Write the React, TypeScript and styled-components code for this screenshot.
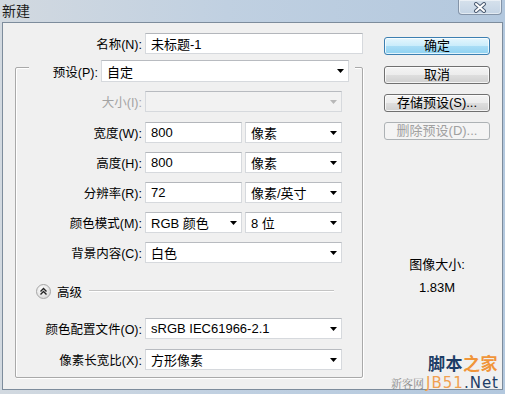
import React from "react";
import styled, { createGlobalStyle } from "styled-components";

const GlobalStyle = createGlobalStyle`
  html, body {
    margin: 0;
    padding: 0;
    background: #c3d2e2;
  }
  body {
    font-family: "Liberation Sans", "Noto Sans CJK SC", sans-serif;
  }
`;

const Window = styled.div`
  position: relative;
  width: 505px;
  height: 394px;
  display: flex;
  flex-direction: column;
  overflow: hidden;
  background: linear-gradient(to right, #d2d9e0 0%, #c0d0e1 45%, #b3c8de 100%);
`;

const TitleBar = styled.div`
  height: 22px;
  display: flex;
  justify-content: space-between;
  align-items: flex-start;
  padding-left: 2px;
`;

const Title = styled.span`
  font-family: "Noto Sans CJK SC", sans-serif;
  font-size: 14px;
  line-height: 21px;
  color: #1c1c1c;
`;

const CloseButton = styled.div`
  width: 44px;
  height: 15px;
  margin-right: 3px;
  box-sizing: border-box;
  border: 1px solid #8494a8;
  border-top: none;
  border-radius: 0 0 4px 4px;
  background: linear-gradient(#d6e1ec, #c4d4e5);
  box-shadow: inset 0 0 0 1px rgba(255, 255, 255, 0.5);
  display: flex;
  align-items: center;
  justify-content: center;
`;

const Client = styled.div`
  flex: 1;
  margin: 0 2px 4px 2px;
  border: 1px solid #7d8c9c;
  background: #f0f0f0;
  display: flex;
  padding-top: 10px;
`;

const LeftPane = styled.div`
  width: 360px;
  display: flex;
  flex-direction: column;
`;

const RightPane = styled.div`
  display: flex;
  flex-direction: column;
  padding: 4px 0 0 21px;
  width: 106px;
`;

const Row = styled.div<{ $mt?: number }>`
  display: flex;
  align-items: center;
  gap: 3px;
  height: 21px;
  margin-top: ${(p) => p.$mt ?? 0}px;
`;

const Label = styled.span<{ $w: number; $disabled?: boolean }>`
  width: ${(p) => p.$w}px;
  flex: none;
  text-align: right;
  font-size: 12.5px;
  white-space: nowrap;
  color: ${(p) => (p.$disabled ? "#a3a3a3" : "#000")};
`;

const TextField = styled.input<{ $w: number }>`
  box-sizing: border-box;
  width: ${(p) => p.$w}px;
  height: 21px;
  margin: 0;
  padding: 0 5px;
  border: 1px solid #d6d9dd;
  border-top-color: #b3b6bb;
  background: #fff;
  font-family: inherit;
  font-size: 13px;
  color: #000;
  outline: none;
`;

const Combo = styled.div<{ $w: number; $h?: number; $disabled?: boolean }>`
  box-sizing: border-box;
  width: ${(p) => p.$w}px;
  height: ${(p) => p.$h ?? 21}px;
  flex: none;
  display: flex;
  align-items: center;
  justify-content: space-between;
  padding: 0 4px 0 5px;
  border: 1px solid #d6d9dd;
  border-top-color: #b8bbc0;
  background: ${(p) => (p.$disabled ? "#f2f2f2" : "#fff")};
  font-size: 13px;
  color: #000;
  white-space: nowrap;
`;

const GroupBox = styled.div`
  box-sizing: border-box;
  width: 348px;
  margin: 13px 0 0 12px;
  padding-bottom: 7px;
  border: 1px solid #a9a9a9;
  border-radius: 2px;
  box-shadow: inset 1px 1px 0 #fff, 1px 1px 0 #fff;
  display: flex;
  flex-direction: column;
`;

const GroupHeader = styled.div`
  align-self: flex-start;
  display: flex;
  align-items: center;
  gap: 3px;
  height: 22px;
  margin: -8px 0 0 13px;
  padding: 0 6px 0 21px;
  background: #f0f0f0;
`;

const AdvancedRow = styled.div`
  display: flex;
  align-items: center;
  height: 16px;
  margin: 20px 28px 0 20px;
`;

const RoundToggle = styled.div`
  width: 15px;
  height: 15px;
  box-sizing: border-box;
  border-radius: 50%;
  border: 1px solid #a6a6a6;
  background: radial-gradient(circle at 40% 35%, #ffffff, #dcdcdc 75%);
  display: flex;
  align-items: center;
  justify-content: center;
  flex: none;
`;

const AdvancedText = styled.span`
  margin: 0 7px 0 6px;
  font-size: 12.5px;
  color: #000;
`;

const Divider = styled.div`
  flex: 1;
  height: 0;
  border-top: 1px solid #c4c4c4;
  border-bottom: 1px solid #fff;
`;

const DialogButton = styled.button<{ $primary?: boolean }>`
  box-sizing: border-box;
  width: 106px;
  height: 18px;
  margin: 0 0 10px 0;
  padding: 0;
  border-radius: 3px;
  border: 1px solid ${(p) => (p.$primary ? "#3c7fb1" : "#707070")};
  background: ${(p) =>
    p.$primary
      ? "linear-gradient(#e5f6fd 0%, #c9ecfb 50%, #a9ddf6 51%, #8fd2f1 100%)"
      : "linear-gradient(#f4f4f4 0%, #ececec 50%, #dedede 51%, #d0d0d0 100%)"};
  box-shadow: inset 0 0 0 1px rgba(255, 255, 255, 0.75);
  font-family: inherit;
  font-size: 13px;
  line-height: 16px;
  color: #000;
  text-align: center;
  &:disabled {
    border-color: #adb2b5;
    background: #f4f4f4;
    color: #a0a0a0;
    box-shadow: none;
  }
  &:first-child {
    margin-bottom: 11px;
  }
`;

const SizeCaption = styled.div<{ $mt: number }>`
  margin-top: ${(p) => p.$mt}px;
  text-align: center;
  font-size: 13px;
  line-height: 16px;
  color: #000;
`;

const Watermark = styled.div`
  position: absolute;
  right: 6px;
  bottom: 3px;
  display: flex;
  flex-direction: column;
  align-items: flex-end;
`;

const WmTop = styled.div`
  font-family: "Noto Sans CJK SC", sans-serif;
  font-weight: 700;
  font-size: 17px;
  line-height: 18px;
  letter-spacing: 0.5px;
  margin-right: 1px;
`;

const WmBottom = styled.div`
  display: flex;
  align-items: baseline;
  margin-top: 4px;
  line-height: 15px;
`;

const WmSmall = styled.span`
  font-family: "Noto Serif CJK SC", "Noto Sans CJK SC", serif;
  font-size: 11px;
  color: #8a8a8a;
  margin-right: 2px;
`;

const WmNet = styled.span`
  font-family: "DejaVu Sans", sans-serif;
  font-size: 15px;
  letter-spacing: 1px;
`;

const Tone = styled.span<{ $c: string }>`
  color: ${(p) => p.$c};
`;

const Arrow = ({ disabled }: { disabled?: boolean }) => (
  <svg width="7" height="4" viewBox="0 0 7 4">
    <path d="M0 0H7L3.5 4Z" fill={disabled ? "#b8b8b8" : "#000"} />
  </svg>
);

const CloseIcon = () => (
  <svg width="14" height="11" viewBox="0 0 14 11">
    <path d="M3 2L11 9M11 2L3 9" stroke="#4d5d73" strokeWidth="4" strokeLinecap="round" />
    <path d="M3 2L11 9M11 2L3 9" stroke="#ffffff" strokeWidth="2" strokeLinecap="round" />
  </svg>
);

const ChevronsUp = () => (
  <svg width="9" height="9" viewBox="0 0 9 9">
    <path d="M1.5 4.5L4.5 1.5L7.5 4.5M1.5 7.5L4.5 4.5L7.5 7.5" fill="none" stroke="#222" strokeWidth="1.4" />
  </svg>
);

const LABEL_W = 126;

export default function App() {
  return (
    <>
      <GlobalStyle />
      <Window>
        <TitleBar>
          <Title>新建</Title>
          <CloseButton>
            <CloseIcon />
          </CloseButton>
        </TitleBar>
        <Client>
          <LeftPane>
            <Row>
              <Label $w={139}>名称(N):</Label>
              <TextField $w={223} defaultValue="未标题-1" readOnly />
            </Row>
            <GroupBox>
              <GroupHeader>
                <Label $w={48}>预设(P):</Label>
                <Combo $w={248} $h={22}>
                  自定
                  <Arrow />
                </Combo>
              </GroupHeader>
              <Row $mt={9}>
                <Label $w={LABEL_W} $disabled>
                  大小(I):
                </Label>
                <Combo $w={197} $disabled>
                  <span />
                  <Arrow disabled />
                </Combo>
              </Row>
              <Row $mt={10}>
                <Label $w={LABEL_W}>宽度(W):</Label>
                <TextField $w={97} defaultValue="800" readOnly />
                <Combo $w={97}>
                  像素
                  <Arrow />
                </Combo>
              </Row>
              <Row $mt={9}>
                <Label $w={LABEL_W}>高度(H):</Label>
                <TextField $w={97} defaultValue="800" readOnly />
                <Combo $w={97}>
                  像素
                  <Arrow />
                </Combo>
              </Row>
              <Row $mt={9}>
                <Label $w={LABEL_W}>分辨率(R):</Label>
                <TextField $w={97} defaultValue="72" readOnly />
                <Combo $w={97}>
                  像素/英寸
                  <Arrow />
                </Combo>
              </Row>
              <Row $mt={9}>
                <Label $w={LABEL_W}>颜色模式(M):</Label>
                <Combo $w={97}>
                  RGB 颜色
                  <Arrow />
                </Combo>
                <Combo $w={97}>
                  8 位
                  <Arrow />
                </Combo>
              </Row>
              <Row $mt={9}>
                <Label $w={LABEL_W}>背景内容(C):</Label>
                <Combo $w={197}>
                  白色
                  <Arrow />
                </Combo>
              </Row>
              <AdvancedRow>
                <RoundToggle>
                  <ChevronsUp />
                </RoundToggle>
                <AdvancedText>高级</AdvancedText>
                <Divider />
              </AdvancedRow>
              <Row $mt={19}>
                <Label $w={LABEL_W}>颜色配置文件(O):</Label>
                <Combo $w={197}>
                  sRGB IEC61966-2.1
                  <Arrow />
                </Combo>
              </Row>
              <Row $mt={10}>
                <Label $w={LABEL_W}>像素长宽比(X):</Label>
                <Combo $w={197}>
                  方形像素
                  <Arrow />
                </Combo>
              </Row>
            </GroupBox>
          </LeftPane>
          <RightPane>
            <DialogButton $primary>确定</DialogButton>
            <DialogButton>取消</DialogButton>
            <DialogButton>存储预设(S)...</DialogButton>
            <DialogButton disabled>删除预设(D)...</DialogButton>
            <SizeCaption $mt={107}>图像大小:</SizeCaption>
            <SizeCaption $mt={7}>1.83M</SizeCaption>
          </RightPane>
        </Client>
        <Watermark>
          <WmTop>
            <Tone $c="#1d3d66">脚本</Tone>
            <Tone $c="#f0953a">之家</Tone>
          </WmTop>
          <WmBottom>
            <WmSmall>新客网</WmSmall>
            <WmNet>
              <Tone $c="#f0a050">JB51</Tone>
              <Tone $c="#1d3d66">.Net</Tone>
            </WmNet>
          </WmBottom>
        </Watermark>
      </Window>
    </>
  );
}
